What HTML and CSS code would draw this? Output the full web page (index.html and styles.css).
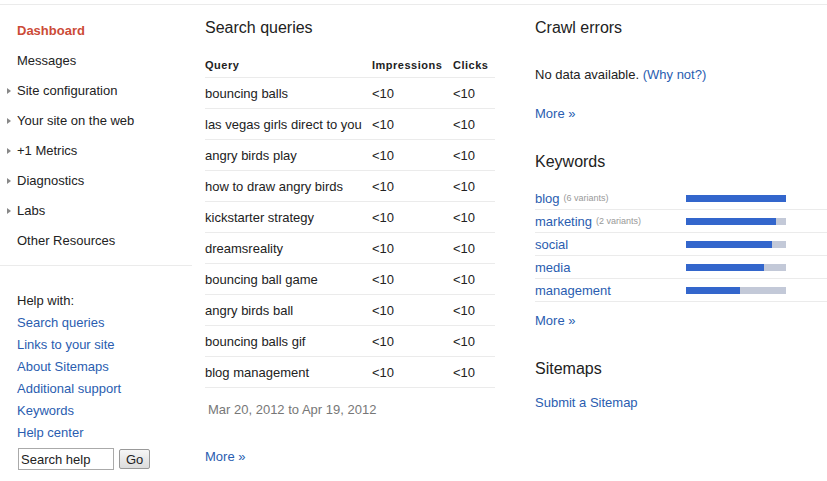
FILE: index.html
```html
<!DOCTYPE html>
<html lang="en">
<head>
  <meta charset="UTF-8">
  <meta name="viewport" content="width=device-width, initial-scale=1.0">
  <title>Dashboard - Webmaster Tools</title>
  <link rel="stylesheet" href="styles.css">
</head>
<body>
  <div class="page">
    <div class="sidebar">
      <ul class="nav">
        <li class="active">Dashboard</li>
        <li>Messages</li>
        <li class="folder">Site configuration</li>
        <li class="folder">Your site on the web</li>
        <li class="folder">+1 Metrics</li>
        <li class="folder">Diagnostics</li>
        <li class="folder">Labs</li>
        <li>Other Resources</li>
      </ul>
      <div class="help">
        <p>Help with:</p>
        <a href="#">Search queries</a>
        <a href="#">Links to your site</a>
        <a href="#">About Sitemaps</a>
        <a href="#">Additional support</a>
        <a href="#">Keywords</a>
        <a href="#">Help center</a>
        <form class="search-help">
          <input type="text" value="Search help">
          <button type="button">Go</button>
        </form>
      </div>
    </div>

    <div class="col-mid">
      <h2>Search queries</h2>
      <table class="queries">
        <tr>
          <th>Query</th>
          <th class="num">Impressions</th>
          <th class="num">Clicks</th>
        </tr>
        <tr><td>bouncing balls</td><td>&lt;10</td><td>&lt;10</td></tr>
        <tr><td>las vegas girls direct to you</td><td>&lt;10</td><td>&lt;10</td></tr>
        <tr><td>angry birds play</td><td>&lt;10</td><td>&lt;10</td></tr>
        <tr><td>how to draw angry birds</td><td>&lt;10</td><td>&lt;10</td></tr>
        <tr><td>kickstarter strategy</td><td>&lt;10</td><td>&lt;10</td></tr>
        <tr><td>dreamsreality</td><td>&lt;10</td><td>&lt;10</td></tr>
        <tr><td>bouncing ball game</td><td>&lt;10</td><td>&lt;10</td></tr>
        <tr><td>angry birds ball</td><td>&lt;10</td><td>&lt;10</td></tr>
        <tr><td>bouncing balls gif</td><td>&lt;10</td><td>&lt;10</td></tr>
        <tr><td>blog management</td><td>&lt;10</td><td>&lt;10</td></tr>
      </table>
      <p class="date">Mar 20, 2012 to Apr 19, 2012</p>
      <a href="#" class="more more-queries">More &raquo;</a>
    </div>

    <div class="col-right">
      <h2>Crawl errors</h2>
      <p class="nodata">No data available. <a href="#">(Why not?)</a></p>
      <a href="#" class="more">More &raquo;</a>

      <h2 class="sec">Keywords</h2>
      <ul class="keywords">
        <li><a href="#">blog</a> <span class="variants">(6 variants)</span><span class="bar"><span class="fill" style="width: 100px"></span></span></li>
        <li><a href="#">marketing</a> <span class="variants">(2 variants)</span><span class="bar"><span class="fill" style="width: 90px"></span></span></li>
        <li><a href="#">social</a><span class="bar"><span class="fill" style="width: 86px"></span></span></li>
        <li><a href="#">media</a><span class="bar"><span class="fill" style="width: 78px"></span></span></li>
        <li><a href="#">management</a><span class="bar"><span class="fill" style="width: 54px"></span></span></li>
      </ul>
      <a href="#" class="more more-kw">More &raquo;</a>

      <h2 class="sec">Sitemaps</h2>
      <a href="#" class="submit">Submit a Sitemap</a>
    </div>
  </div>
</body>
</html>
```

FILE: styles.css
```css
body {
  margin: 0;
  padding-top: 4px;
  font-family: "Liberation Sans", Arial, sans-serif;
  font-size: 13px;
  color: #222;
  background: #fff;
}

a {
  color: #2a5db0;
  text-decoration: none;
}

.page {
  display: flex;
  border-top: 1px solid #ebebeb;
}

/* left nav */
.sidebar {
  width: 192px;
  flex-shrink: 0;
}
.nav {
  list-style: none;
  margin: 0;
  padding: 11px 0 9px;
  border-bottom: 1px solid #ebebeb;
}
.nav li {
  position: relative;
  line-height: 30px;
  padding-left: 17px;
  color: #222;
}
.nav li.active {
  color: #cc4b37;
  font-weight: bold;
}
.nav li.folder::before {
  content: "";
  position: absolute;
  left: 7px;
  top: 12px;
  border-left: 4px solid #888;
  border-top: 3.5px solid transparent;
  border-bottom: 3.5px solid transparent;
}

.help {
  padding: 24px 0 0 17px;
}
.help p {
  margin: 0;
  line-height: 22px;
}
.help a {
  display: block;
  line-height: 22px;
}
.search-help {
  display: flex;
  align-items: center;
  gap: 5px;
  margin: 4px 0 0 1px;
}
.search-help input {
  width: 90px;
  height: 18px;
  padding: 1px 2px;
  border: 1px solid #aaa;
  font-family: inherit;
  font-size: 13px;
  color: #222;
}
.search-help button {
  height: 20px;
  padding: 0 6px;
  border: 1px solid #999;
  border-radius: 2px;
  background: linear-gradient(to bottom, #f6f6f6, #dcdcdc);
  font-family: inherit;
  font-size: 13px;
  color: #222;
}

/* middle column */
h2 {
  margin: 0;
  font-size: 16px;
  font-weight: normal;
  line-height: 20px;
  color: #222;
}
.col-mid {
  width: 290px;
  margin-left: 13px;
  padding-top: 13px;
}
.queries {
  width: 290px;
  margin-top: 15px;
  border-collapse: collapse;
}
.queries th {
  height: 23px;
  padding: 0 0 1px;
  text-align: left;
  font-size: 11px;
  font-weight: bold;
  letter-spacing: 0.5px;
  vertical-align: middle;
  border-bottom: 1px solid #ebebeb;
}
.queries td {
  height: 30px;
  padding: 0;
  border-bottom: 1px solid #ebebeb;
  white-space: nowrap;
}
.queries td:first-child {
  width: 167px;
}
.queries td:nth-child(2),
.queries th:nth-child(2) {
  width: 81px;
}
.date {
  margin: 12px 0 0 3px;
  line-height: 20px;
  color: #777;
}
.more {
  display: block;
  line-height: 20px;
}
.more-queries {
  margin-top: 27px;
}

/* right column */
.col-right {
  flex: 1;
  margin-left: 40px;
  padding-top: 13px;
}
.nodata {
  margin: 27px 0 0;
  line-height: 20px;
}
.col-right .more {
  margin-top: 19px;
}
.col-right h2.sec {
  margin-top: 28px;
}
.keywords {
  list-style: none;
  margin: 15px 0 0;
  padding: 0;
}
.keywords li {
  position: relative;
  display: flex;
  align-items: center;
  height: 22px;
  border-bottom: 1px solid #ebebeb;
}
.variants {
  margin-left: 4px;
  font-size: 9px;
  color: #999;
}
.bar {
  position: absolute;
  left: 151px;
  display: flex;
  width: 100px;
  height: 7px;
  background: #c3c9d8;
}
.fill {
  display: block;
  height: 7px;
  background: #3366cc;
}
.col-right .more-kw {
  margin-top: 9px;
}
.submit {
  display: block;
  margin-top: 14px;
  line-height: 20px;
}
```
